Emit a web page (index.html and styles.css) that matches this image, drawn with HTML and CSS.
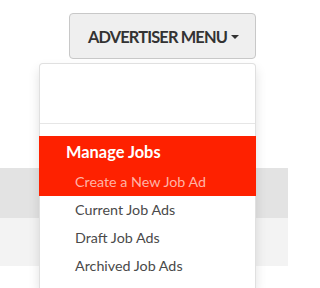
FILE: index.html
```html
<!DOCTYPE html>
<html>
<head>
<meta charset="utf-8">
<link rel="stylesheet" href="styles.css">
</head>
<body>
<div class="header">
  <button class="adv-btn">ADVERTISER MENU<span class="caret"></span></button>
</div>
<div class="bg">
  <div class="band band-dark"></div>
  <div class="band band-light"></div>
</div>
<div class="menu">
  <div class="menu-top"></div>
  <div class="section active">
    <div class="section-title">Manage Jobs</div>
    <a class="item item-hl">Create a New Job Ad</a>
  </div>
  <a class="item">Current Job Ads</a>
  <a class="item">Draft Job Ads</a>
  <a class="item">Archived Job Ads</a>
</div>
</body>
</html>
```
FILE: styles.css
```css
html, body {
  margin: 0;
  padding: 0;
  background: #fff;
  font-family: Lato, "Open Sans", sans-serif;
  overflow: hidden;
  width: 288px;
  height: 288px;
}
.header {
  display: flex;
  justify-content: flex-end;
  padding: 13px 32px 0 0;
}
.adv-btn {
  box-sizing: border-box;
  height: 46px;
  width: 187px;
  padding: 0 0 0 2px;
  background: #efefef;
  border: 1px solid #c8c8c8;
  border-radius: 4px;
  font-family: Lato, sans-serif;
  font-weight: 700;
  font-size: 16.4px;
  color: #333;
  display: flex;
  align-items: center;
  justify-content: center;
  white-space: nowrap;
  letter-spacing: -0.85px;
}
.caret {
  display: inline-block;
  width: 0;
  height: 0;
  margin-left: 4px;
  margin-top: 2px;
  border-top: 4px solid #333;
  border-left: 4.5px solid transparent;
  border-right: 4.5px solid transparent;
}
.bg {
  margin-top: 109px;
}
.band {
  width: 100%;
}
.band-dark {
  height: 50px;
  background: #e3e3e3;
}
.band-light {
  height: 48px;
  background: #f3f3f3;
}
.menu {
  position: absolute;
  top: 63px;
  left: 39px;
  width: 217px;
  height: 225px;
  box-sizing: border-box;
  background: #fff;
  border: 1px solid rgba(0,0,0,0.12);
  border-bottom: none;
  border-radius: 4px 4px 0 0;
  box-shadow: 0 6px 12px rgba(0,0,0,0.12);
}
.menu-top {
  height: 59px;
  border-bottom: 1px solid #e6e6e6;
  margin-bottom: 12px;
}
.section.active {
  background: #fe2100;
  margin: 0 -1px;
}
.section-title {
  height: 32px;
  line-height: 32px;
  padding-left: 27px;
  font-size: 16.4px;
  font-weight: 700;
  color: #fff;
}
.item {
  display: block;
  height: 28px;
  line-height: 28px;
  padding-left: 35px;
  font-size: 14.3px;
  color: #4a4a4a;
}
.item-hl {
  color: #ffb3a6;
  padding-left: 36px;
}
```
